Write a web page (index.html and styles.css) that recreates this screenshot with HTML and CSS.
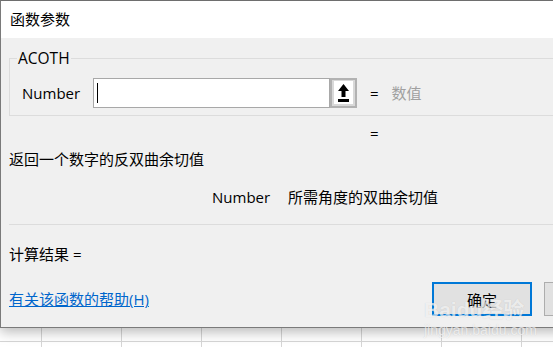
FILE: index.html
```html
<!DOCTYPE html>
<html lang="zh-CN">
<head>
<meta charset="utf-8">
<title>函数参数</title>
<link rel="stylesheet" href="styles.css">
</head>
<body>
<div class="dialog">
  <div class="titlebar">函数参数</div>
  <div class="content">
    <div class="group">
      <span class="legend">ACOTH</span>
      <div class="argrow">
        <span class="arglabel">Number</span>
        <span class="input"><span class="caret"></span></span>
        <span class="refbtn">
          <span class="refinner">
            <svg width="11" height="18" viewBox="0 0 11 18"><polygon points="5.5,0 0,7 3.5,7 3.5,13 7.5,13 7.5,7 11,7" fill="#000"/><rect x="0" y="15" width="11" height="3" fill="#000"/></svg>
          </span>
        </span>
        <span class="eq">=</span>
        <span class="hint">数值</span>
      </div>
    </div>
    <div class="eq2">=</div>
    <div class="desc">返回一个数字的反双曲余切值</div>
    <div class="params"><span class="pname">Number</span><span class="ptext">所需角度的双曲余切值</span></div>
    <div class="sep"></div>
    <div class="result">计算结果 =</div>
    <div class="footer">
      <a class="help" href="#">有关该函数的帮助(H)</a>
      <span class="btn primary">确定</span>
      <span class="btn">取消</span>
    </div>
  </div>
</div>
<div class="watermark">
  <div class="wm-big">Baidu经验</div>
  <div class="wm-small">jingyan.baidu.com</div>
</div>
</body>
</html>
```

FILE: styles.css
```css
html {
  overflow: hidden;
  background-color: #ffffff;
  background-image:
    linear-gradient(to right, #d6d6d6 1px, transparent 1px),
    linear-gradient(to bottom, #d6d6d6 1px, transparent 1px);
  background-size: 80px 100%, 100% 20px;
  background-position: 41px 0, 0 1px;
}
body {
  margin: 0;
  width: 553px;
  height: 347px;
  position: relative;
  overflow: hidden;
  font-family: "Open Sans", "Noto Sans CJK SC", sans-serif;
  font-size: 15px;
  color: #000;
}
.dialog {
  width: 620px;
  border: 1px solid #7a7a7a;
  border-top-color: #6e6e6e;
  border-right: none;
  box-shadow: 0 4px 12px rgba(0, 0, 0, 0.28);
  background: #f0f0f0;
}
.titlebar {
  height: 37px;
  line-height: 37px;
  background: #fff;
  padding-left: 9px;
}
.content {
  padding: 0 0 11px 8px;
}
.group {
  position: relative;
  margin-top: 20px;
  height: 56px;
  border: 1px solid #dcdcdc;
  border-right: none;
}
.legend {
  position: absolute;
  top: -11px;
  left: 7px;
  padding: 0 1px;
  line-height: 20px;
  font-size: 15.5px;
  background: #f0f0f0;
}
.argrow {
  display: flex;
  align-items: center;
  height: 30px;
  margin-top: 19px;
  padding-left: 12px;
}
.argrow > * {
  flex-shrink: 0;
}
.arglabel {
  width: 71px;
  line-height: 20px;
}
.input {
  width: 237px;
  height: 30px;
  box-sizing: border-box;
  border: 1px solid #a8a8a8;
  background: #fff;
  display: flex;
  align-items: center;
  padding-left: 3px;
}
.caret {
  width: 1px;
  height: 20px;
  background: #000;
}
.refbtn {
  width: 27px;
  height: 30px;
  box-sizing: border-box;
  border: 2px solid #b2b2b2;
  background: #d9d9d9;
  padding: 1px 2px 2px 2px;
  display: flex;
}
.refinner {
  flex: 1;
  background: #fff;
  display: flex;
  align-items: center;
  justify-content: center;
}
.eq {
  margin-left: 13px;
  line-height: 20px;
}
.hint {
  margin-left: 13px;
  color: #a0a0a0;
  line-height: 20px;
}
.eq2 {
  margin-top: 7px;
  height: 20px;
  line-height: 20px;
  padding-left: 361px;
}
.desc {
  margin-top: 6px;
  height: 20px;
  line-height: 20px;
}
.params {
  margin-top: 18px;
  height: 20px;
  line-height: 20px;
  display: flex;
  padding-left: 203px;
}
.pname {
  width: 76px;
  flex-shrink: 0;
}
.sep {
  margin-top: 17px;
  height: 1px;
  background: #dcdcdc;
}
.result {
  margin-top: 19px;
  height: 20px;
  line-height: 20px;
}
.footer {
  margin-top: 18px;
  height: 34px;
  display: flex;
  align-items: center;
}
.footer > * {
  flex-shrink: 0;
}
.help {
  color: #0066cc;
  text-decoration: underline;
  line-height: 20px;
  width: 423px;
}
.btn {
  width: 100px;
  height: 34px;
  box-sizing: border-box;
  border: 1px solid #adadad;
  background: #e1e1e1;
  display: flex;
  align-items: center;
  justify-content: center;
  margin-right: 12px;
}
.btn.primary {
  border: 2px solid #0078d7;
}
.watermark {
  position: absolute;
  left: 424px;
  top: 298px;
  color: rgba(255, 255, 255, 0.7);
  text-shadow: 0 0 1px rgba(0, 0, 0, 0.15);
  font-family: "Liberation Sans", "Noto Sans CJK SC", sans-serif;
  pointer-events: none;
}
.wm-big {
  font-size: 21px;
  font-weight: bold;
  line-height: 24px;
}
.wm-small {
  font-size: 14px;
  line-height: 16px;
}
```
